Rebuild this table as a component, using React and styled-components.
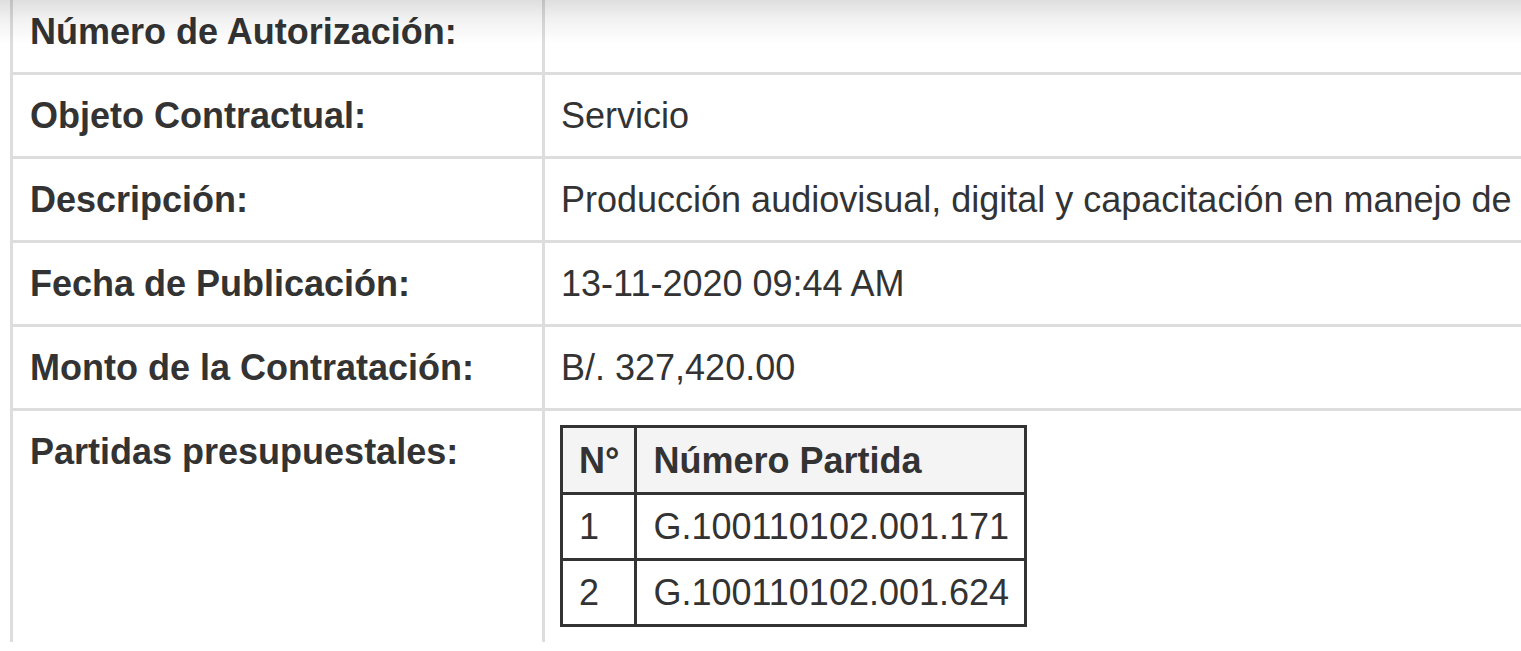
import React from "react";
import styled, { createGlobalStyle } from "styled-components";

const GlobalStyle = createGlobalStyle`
  html, body {
    margin: 0;
    padding: 0;
    background: #fff;
    overflow: hidden;
  }
  body {
    font-family: "Liberation Sans", Arial, Helvetica, sans-serif;
    font-size: 36px;
    line-height: 51px;
    color: #333;
  }
`;

const TopShade = styled.div`
  position: fixed;
  top: 0;
  left: 0;
  right: 0;
  height: 44px;
  pointer-events: none;
  background: linear-gradient(
    to bottom,
    rgba(0, 0, 0, 0.13) 0%,
    rgba(0, 0, 0, 0.05) 45%,
    rgba(0, 0, 0, 0) 100%
  );
`;

const Page = styled.main`
  padding-left: 10px;
  margin-top: -12px;
`;

const DetailTable = styled.table`
  border-collapse: collapse;
  width: 2400px;
  table-layout: fixed;
`;

const Row = styled.tr`
  border-top: 3px solid #ddd;
  border-left: 3px solid #ddd;
`;

const Label = styled.th`
  width: 496px;
  padding: 15px 16px 15px 17px;
  text-align: left;
  vertical-align: top;
  font-weight: 700;
  border-right: 3px solid #ddd;
  white-space: nowrap;
`;

const Value = styled.td`
  padding: 15px 16px;
  vertical-align: top;
  font-weight: 400;
  white-space: nowrap;
`;

const BudgetTable = styled.table`
  border-collapse: collapse;
  border: 3px solid #333;
  margin-top: -1px;
  margin-left: -1px;
`;

const BudgetHead = styled.th`
  background: #f4f4f4;
  text-align: left;
  font-weight: 700;
  padding: 7px 15px 6px 16px;
  border: 3px solid #333;
`;

const BudgetCell = styled.td`
  padding: 6px 15px 6px 16px;
  border: 3px solid #333;
`;

const rows = [
  { label: "Número de Autorización:", value: "" },
  { label: "Objeto Contractual:", value: "Servicio" },
  {
    label: "Descripción:",
    value: "Producción audiovisual, digital y capacitación en manejo de",
  },
  { label: "Fecha de Publicación:", value: "13-11-2020 09:44 AM" },
  { label: "Monto de la Contratación:", value: "B/. 327,420.00" },
];

const partidas = ["G.100110102.001.171", "G.100110102.001.624"];

export default function App() {
  return (
    <>
      <GlobalStyle />
      <Page>
        <DetailTable>
          <tbody>
            {rows.map((r) => (
              <Row key={r.label}>
                <Label>{r.label}</Label>
                <Value>{r.value}</Value>
              </Row>
            ))}
            <Row>
              <Label>Partidas presupuestales:</Label>
              <Value>
                <BudgetTable>
                  <thead>
                    <tr>
                      <BudgetHead>N°</BudgetHead>
                      <BudgetHead>Número Partida</BudgetHead>
                    </tr>
                  </thead>
                  <tbody>
                    {partidas.map((p, i) => (
                      <tr key={p}>
                        <BudgetCell>{i + 1}</BudgetCell>
                        <BudgetCell>{p}</BudgetCell>
                      </tr>
                    ))}
                  </tbody>
                </BudgetTable>
              </Value>
            </Row>
          </tbody>
        </DetailTable>
      </Page>
      <TopShade />
    </>
  );
}
